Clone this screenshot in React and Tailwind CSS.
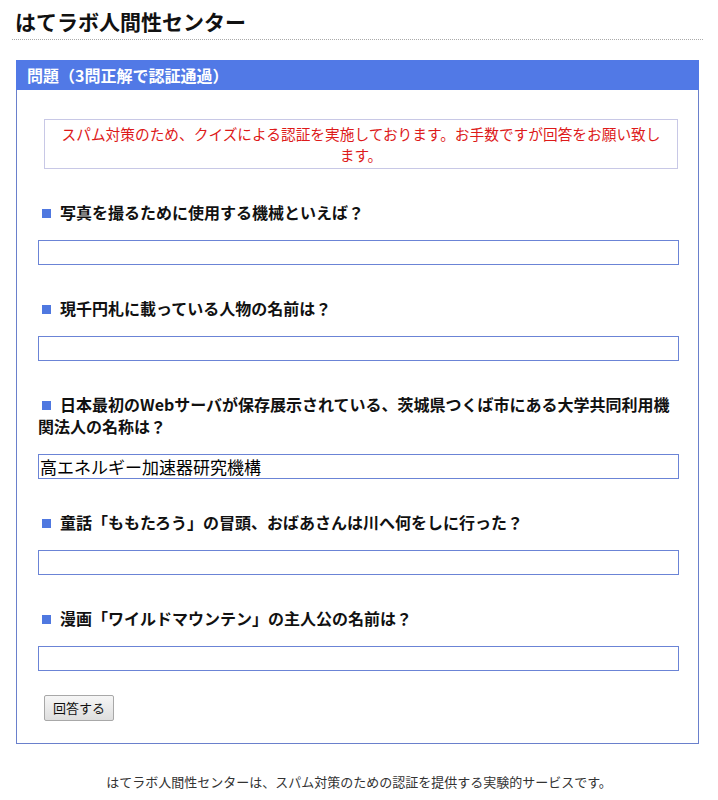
import React from 'react'

const questions = [
  { q: '写真を撮るために使用する機械といえば？', a: '' },
  { q: '現千円札に載っている人物の名前は？', a: '' },
  { q: '日本最初のWebサーバが保存展示されている、茨城県つくば市にある大学共同利用機関法人の名称は？', a: '高エネルギー加速器研究機構' },
  { q: '童話「ももたろう」の冒頭、おばあさんは川へ何をしに行った？', a: '' },
  { q: '漫画「ワイルドマウンテン」の主人公の名前は？', a: '' },
]

const Question = ({ q, a }) => {
  return (
    <div className="mt-[32px] w-[641px]">
      <p className="text-[16px] leading-[22px] font-bold text-[#111]">
        <span className="inline-block w-[9px] h-[9px] bg-[#4f78e0] ml-[4px] mr-[9px] align-[1px]"></span>
        {q}
      </p>
      <input
        type="text"
        defaultValue={a}
        className="mt-[17px] block w-[641px] h-[25px] border border-[#6b84d6] px-[1px] text-[17px] text-black outline-none bg-white"
      />
    </div>
  )
}

const App = () => {
  return (
    <div className="min-h-[800px] bg-white text-[#111]" style={{ fontFamily: '"Noto Sans CJK JP", "Noto Sans", sans-serif' }}>
      <div className="ml-[12px] w-[691px]">
        <h1 className="pt-[7px] pb-[4px] pl-[3px] text-[21px] leading-[28px] font-bold text-[#111] border-b border-dotted border-[#aaa]">
          はてラボ人間性センター
        </h1>

        <div className="mx-[4px] mt-[20px] border border-[#6a80cc]">
          <div className="h-[30px] bg-[#5179e6] pl-[11px] text-[16px] leading-[30px] font-bold text-white -mx-px -mt-px">
            問題（3問正解で認証通過）
          </div>

          <div className="pl-[21px] pb-[22px]">
            <div className="mt-[29px] ml-[6px] w-[634px] border border-[#c8c8e6] px-[16px] py-[3px] text-center text-[14.7px] leading-[21px] text-[#dd1a1a]">
              スパム対策のため、クイズによる認証を実施しております。お手数ですが回答をお願い致します。
            </div>

            {questions.map((item, i) => (
              <Question key={i} q={item.q} a={item.a} />
            ))}

            <button className="mt-[24px] ml-[6px] w-[70px] h-[26px] border border-[#a8a8a8] rounded-[2px] bg-gradient-to-b from-[#f6f6f6] to-[#dedede] text-[13px] text-[#111]">
              回答する
            </button>
          </div>
        </div>
      </div>

      <p className="mt-[28px] text-center text-[13px] leading-[20px] text-[#333]">
        はてラボ人間性センターは、スパム対策のための認証を提供する実験的サービスです。
      </p>
    </div>
  )
}

export default App
